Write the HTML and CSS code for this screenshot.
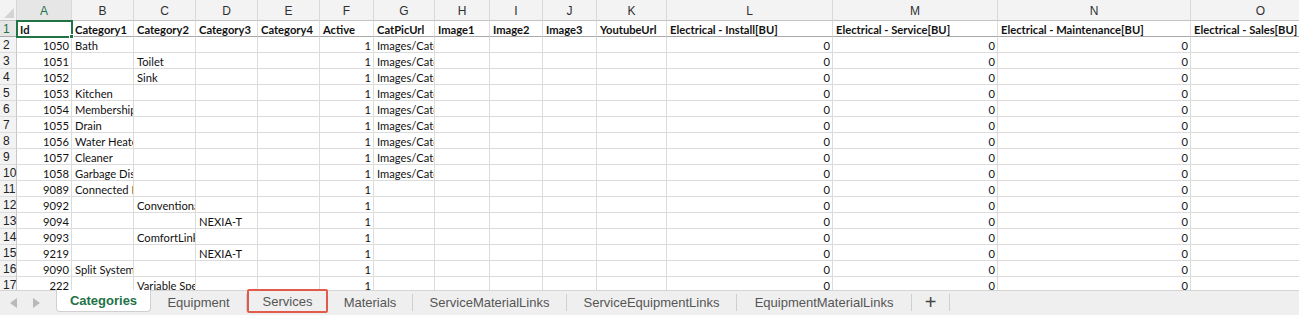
FILE: index.html
```html
<!DOCTYPE html>
<html>
<head>
<meta charset="utf-8">
<link rel="stylesheet" href="styles.css">
</head>
<body>
<div class="app">
  <div class="sheet">
    <div class="corner"><span class="tri"></span></div>
    <div class="ch sel">A</div><div class="ch">B</div><div class="ch">C</div><div class="ch">D</div><div class="ch">E</div><div class="ch">F</div><div class="ch">G</div><div class="ch">H</div><div class="ch">I</div><div class="ch">J</div><div class="ch">K</div><div class="ch">L</div><div class="ch">M</div><div class="ch">N</div><div class="ch">O</div>

    <div class="rh sel f">1</div>
    <div class="c b f active-cell">Id<span class="handle"></span></div><div class="c b f">Category1</div><div class="c b f">Category2</div><div class="c b f">Category3</div><div class="c b f">Category4</div><div class="c b f">Active</div><div class="c b f">CatPicUrl</div><div class="c b f">Image1</div><div class="c b f">Image2</div><div class="c b f">Image3</div><div class="c b f">YoutubeUrl</div><div class="c b f">Electrical - Install[BU]</div><div class="c b f">Electrical - Service[BU]</div><div class="c b f">Electrical - Maintenance[BU]</div><div class="c b f">Electrical - Sales[BU]</div>

    <div class="rh">2</div>
    <div class="c n">1050</div><div class="c">Bath</div><div class="c"></div><div class="c"></div><div class="c"></div><div class="c n">1</div><div class="c">Images/Categories</div><div class="c"></div><div class="c"></div><div class="c"></div><div class="c"></div><div class="c n">0</div><div class="c n">0</div><div class="c n">0</div><div class="c"></div>

    <div class="rh">3</div>
    <div class="c n">1051</div><div class="c"></div><div class="c">Toilet</div><div class="c"></div><div class="c"></div><div class="c n">1</div><div class="c">Images/Categories</div><div class="c"></div><div class="c"></div><div class="c"></div><div class="c"></div><div class="c n">0</div><div class="c n">0</div><div class="c n">0</div><div class="c"></div>

    <div class="rh">4</div>
    <div class="c n">1052</div><div class="c"></div><div class="c">Sink</div><div class="c"></div><div class="c"></div><div class="c n">1</div><div class="c">Images/Categories</div><div class="c"></div><div class="c"></div><div class="c"></div><div class="c"></div><div class="c n">0</div><div class="c n">0</div><div class="c n">0</div><div class="c"></div>

    <div class="rh">5</div>
    <div class="c n">1053</div><div class="c">Kitchen</div><div class="c"></div><div class="c"></div><div class="c"></div><div class="c n">1</div><div class="c">Images/Categories</div><div class="c"></div><div class="c"></div><div class="c"></div><div class="c"></div><div class="c n">0</div><div class="c n">0</div><div class="c n">0</div><div class="c"></div>

    <div class="rh">6</div>
    <div class="c n">1054</div><div class="c">Membership</div><div class="c"></div><div class="c"></div><div class="c"></div><div class="c n">1</div><div class="c">Images/Categories</div><div class="c"></div><div class="c"></div><div class="c"></div><div class="c"></div><div class="c n">0</div><div class="c n">0</div><div class="c n">0</div><div class="c"></div>

    <div class="rh">7</div>
    <div class="c n">1055</div><div class="c">Drain</div><div class="c"></div><div class="c"></div><div class="c"></div><div class="c n">1</div><div class="c">Images/Categories</div><div class="c"></div><div class="c"></div><div class="c"></div><div class="c"></div><div class="c n">0</div><div class="c n">0</div><div class="c n">0</div><div class="c"></div>

    <div class="rh">8</div>
    <div class="c n">1056</div><div class="c">Water Heater</div><div class="c"></div><div class="c"></div><div class="c"></div><div class="c n">1</div><div class="c">Images/Categories</div><div class="c"></div><div class="c"></div><div class="c"></div><div class="c"></div><div class="c n">0</div><div class="c n">0</div><div class="c n">0</div><div class="c"></div>

    <div class="rh">9</div>
    <div class="c n">1057</div><div class="c">Cleaner</div><div class="c"></div><div class="c"></div><div class="c"></div><div class="c n">1</div><div class="c">Images/Categories</div><div class="c"></div><div class="c"></div><div class="c"></div><div class="c"></div><div class="c n">0</div><div class="c n">0</div><div class="c n">0</div><div class="c"></div>

    <div class="rh">10</div>
    <div class="c n">1058</div><div class="c">Garbage Disposal</div><div class="c"></div><div class="c"></div><div class="c"></div><div class="c n">1</div><div class="c">Images/Categories</div><div class="c"></div><div class="c"></div><div class="c"></div><div class="c"></div><div class="c n">0</div><div class="c n">0</div><div class="c n">0</div><div class="c"></div>

    <div class="rh">11</div>
    <div class="c n">9089</div><div class="c">Connected Home</div><div class="c"></div><div class="c"></div><div class="c"></div><div class="c n">1</div><div class="c"></div><div class="c"></div><div class="c"></div><div class="c"></div><div class="c"></div><div class="c n">0</div><div class="c n">0</div><div class="c n">0</div><div class="c"></div>

    <div class="rh">12</div>
    <div class="c n">9092</div><div class="c"></div><div class="c">Conventional</div><div class="c"></div><div class="c"></div><div class="c n">1</div><div class="c"></div><div class="c"></div><div class="c"></div><div class="c"></div><div class="c"></div><div class="c n">0</div><div class="c n">0</div><div class="c n">0</div><div class="c"></div>

    <div class="rh">13</div>
    <div class="c n">9094</div><div class="c"></div><div class="c"></div><div class="c">NEXIA-T</div><div class="c"></div><div class="c n">1</div><div class="c"></div><div class="c"></div><div class="c"></div><div class="c"></div><div class="c"></div><div class="c n">0</div><div class="c n">0</div><div class="c n">0</div><div class="c"></div>

    <div class="rh">14</div>
    <div class="c n">9093</div><div class="c"></div><div class="c">ComfortLink</div><div class="c"></div><div class="c"></div><div class="c n">1</div><div class="c"></div><div class="c"></div><div class="c"></div><div class="c"></div><div class="c"></div><div class="c n">0</div><div class="c n">0</div><div class="c n">0</div><div class="c"></div>

    <div class="rh">15</div>
    <div class="c n">9219</div><div class="c"></div><div class="c"></div><div class="c">NEXIA-T</div><div class="c"></div><div class="c n">1</div><div class="c"></div><div class="c"></div><div class="c"></div><div class="c"></div><div class="c"></div><div class="c n">0</div><div class="c n">0</div><div class="c n">0</div><div class="c"></div>

    <div class="rh">16</div>
    <div class="c n">9090</div><div class="c">Split System</div><div class="c"></div><div class="c"></div><div class="c"></div><div class="c n">1</div><div class="c"></div><div class="c"></div><div class="c"></div><div class="c"></div><div class="c"></div><div class="c n">0</div><div class="c n">0</div><div class="c n">0</div><div class="c"></div>

    <div class="rh">17</div>
    <div class="c n">222</div><div class="c"></div><div class="c">Variable Speed</div><div class="c"></div><div class="c"></div><div class="c n">1</div><div class="c"></div><div class="c"></div><div class="c"></div><div class="c"></div><div class="c"></div><div class="c n">0</div><div class="c n">0</div><div class="c n">0</div><div class="c"></div>
  </div>

  <div class="tabbar">
    <div class="nav">
      <svg width="9" height="10" viewBox="0 0 9 10"><path d="M8 0 L8 10 L1 5 Z" fill="#b9b9b9"/></svg>
      <svg width="9" height="10" viewBox="0 0 9 10"><path d="M1 0 L1 10 L8 5 Z" fill="#b9b9b9"/></svg>
    </div>
    <div class="tab current">Categories</div>
    <div class="tab">Equipment</div>
    <div class="tab marked">Services</div>
    <div class="tab">Materials</div>
    <div class="tab">ServiceMaterialLinks</div>
    <div class="tab">ServiceEquipmentLinks</div>
    <div class="tab">EquipmentMaterialLinks</div>
    <div class="tab add">+</div>
  </div>
</div>
</body>
</html>
```

FILE: styles.css
```css
* { box-sizing: border-box; }
html, body { margin: 0; padding: 0; background: #fff; }
body { width: 1299px; height: 315px; overflow: hidden; }

.app {
  display: flex;
  flex-direction: column;
  height: 315px;
}

.sheet {
  height: 290px;
  overflow: hidden;
  display: grid;
  grid-template-columns: 17px 55px 62px 62px 62px 62px 54px 61px 55px 53px 54px 70px 166px 165px 193px 140px;
  grid-template-rows: 21px;
  grid-auto-rows: 16px;
  font-family: "Lato", "Open Sans", sans-serif;
  font-size: 11.2px;
  color: #111;
}

.corner {
  background: #f3f3f3;
  border-right: 1px solid #d6d6d6;
  border-bottom: 1px solid #c4c4c4;
  position: relative;
}
.tri {
  position: absolute;
  right: 2px;
  bottom: 2px;
  width: 0; height: 0;
  border-left: 10px solid transparent;
  border-bottom: 10px solid #d4d4d4;
}

.ch {
  background: #f3f3f3;
  border-right: 1px solid #d9d9d9;
  border-bottom: 1px solid #c4c4c4;
  display: flex;
  align-items: center;
  justify-content: center;
  padding-top: 1px;
  font-family: "Liberation Sans", Arial, sans-serif;
  font-size: 12px;
  color: #303030;
}
.ch.sel { color: #217346; background: #e6e6e6; }

.rh {
  background: #f3f3f3;
  border-right: 1px solid #c8c8c8;
  border-bottom: 1px solid #dcdcdc;
  display: flex;
  align-items: center;
  padding: 1px 0 0 3px;
  font-family: "Liberation Sans", Arial, sans-serif;
  font-size: 12px;
  color: #222;
}
.rh.sel { color: #217346; background: #e6e6e6; }

.c {
  border-right: 1px solid #dcdcdc;
  border-bottom: 1px solid #dcdcdc;
  padding: 1px 2px 0 3px;
  white-space: nowrap;
  overflow: hidden;
  line-height: 15px;
}
.c.n { text-align: right; }
.c.b { font-weight: bold; }
.f, .rh.f { border-bottom: 1px solid #a8a8a8; }

.active-cell {
  position: relative;
  overflow: visible;
  outline: 2px solid #217346;
  outline-offset: -1px;
  z-index: 2;
}
.handle {
  position: absolute;
  right: -3px;
  bottom: -3px;
  width: 5px;
  height: 5px;
  background: #217346;
  border: 1px solid #fff;
}

.tabbar {
  height: 25px;
  background: #efefef;
  border-top: 1px solid #d4d4d4;
  display: flex;
  align-items: stretch;
  font-family: "Liberation Sans", Arial, sans-serif;
  font-size: 13px;
  color: #555;
}
.nav {
  width: 56px;
  display: flex;
  align-items: center;
  gap: 14px;
  padding-left: 9px;
}
.tab {
  display: flex;
  align-items: center;
  justify-content: center;
  padding: 0 18px;
  margin: 3px 0 4px;
  border-right: 1px solid #cfcfcf;
}
.tab.current {
  margin: -1px 0 3px;
  width: 95px;
  background: #fff;
  border: 1px solid #d0d0d0;
  border-top: none;
  border-radius: 0 0 4px 4px;
  color: #217346;
  font-weight: bold;
}
.tab:nth-child(3) { width: 96px; }
.tab.marked {
  width: 81px;
  margin: -2px 0 2px;
  border: 2px solid #e25a4c;
  border-radius: 2px;
}
.tab:nth-child(5) { width: 85px; }
.tab:nth-child(6) { width: 154px; }
.tab:nth-child(7) { width: 170px; }
.tab:nth-child(8) { width: 175px; }
.tab.add {
  width: 38px;
  padding: 0;
  font-size: 20px;
  color: #444;
}
```
